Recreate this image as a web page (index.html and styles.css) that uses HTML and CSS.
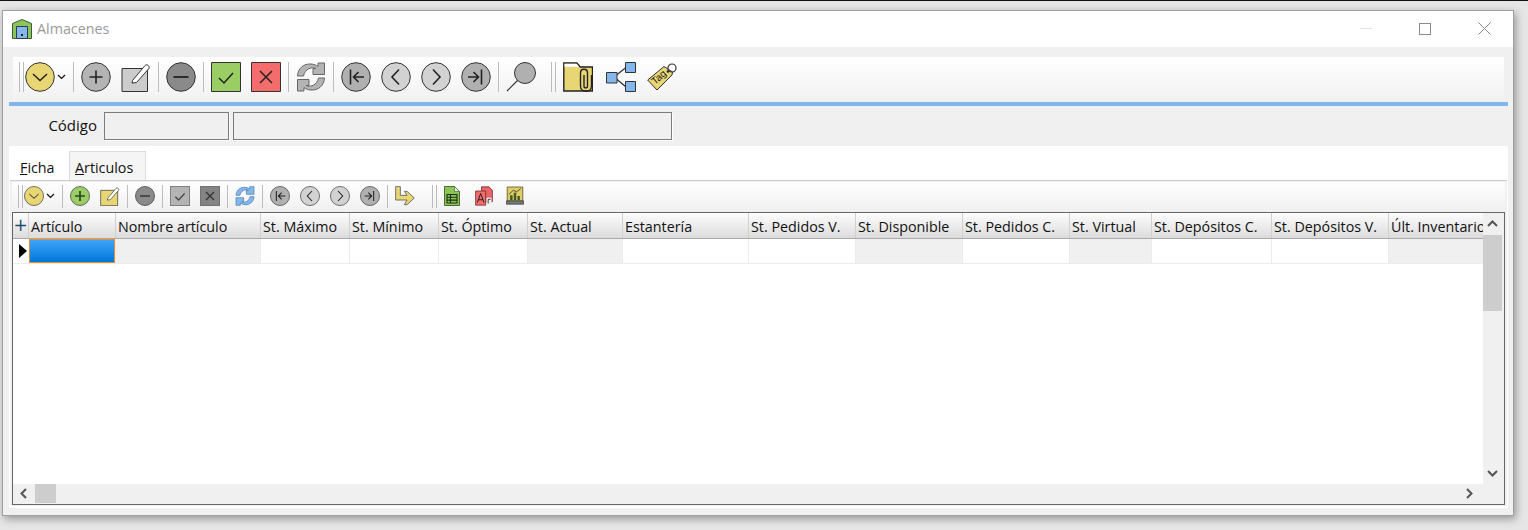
FILE: index.html
```html
<!DOCTYPE html>
<html lang="es">

<head>
  <meta charset="UTF-8">
  <title>Almacenes</title>
  <link rel="stylesheet" href="styles.css">
</head>

<body>
  <!-- iconos compartidos por las dos barras -->
  <svg class="defs" width="0" height="0">
    <symbol id="i-menu" viewBox="0 0 30 30"><circle cx="15" cy="15" r="14.300" fill="#e8d674" stroke="#333"/><path d="M8 12l7 6.500 7-6.500" fill="none" stroke="#222" stroke-width="1.500"/></symbol>
    <symbol id="i-plus" viewBox="0 0 30 30"><circle cx="15" cy="15" r="14.300" fill="#b4b4b4" stroke="#333"/><path d="M15 8.500v13M8.500 15h13" stroke="#222" stroke-width="1.600"/></symbol>
    <symbol id="i-plus-on" viewBox="0 0 30 30"><circle cx="15" cy="15" r="14.300" fill="#9acd64" stroke="#333"/><path d="M15 7.500v15M7.500 15h15" stroke="#2c4a1a" stroke-width="2.600"/></symbol>
    <symbol id="i-edit" viewBox="0 0 30 30"><path d="M1 6.500h25.500V29.500H1z" fill="#ccc" stroke="#333"/><path d="M11.500 18.500L24 3.500c2-2 5.500 1 3.700 3.300L15.500 20.500l-4.500.600z" fill="#fff" stroke="#333"/></symbol>
    <symbol id="i-edit-on" viewBox="0 0 30 30"><path d="M1 6.500h25.500V29.500H1z" fill="#e8d674" stroke="#333"/><path d="M11.500 18.500L24 3.500c2-2 5.500 1 3.700 3.300L15.500 20.500l-4.500.600z" fill="#fff" stroke="#333"/></symbol>
    <symbol id="i-minus" viewBox="0 0 30 30"><circle cx="15" cy="15" r="14.300" fill="#8a8a8a" stroke="#333"/><path d="M7.500 15h15" stroke="#222" stroke-width="1.800"/></symbol>
    <symbol id="i-ok" viewBox="0 0 30 30"><path d="M.5.500h29v29H.500z" fill="#9acd64" stroke="#333"/><path d="M8 16l5 5 9-10" fill="none" stroke="#222" stroke-width="1.500"/></symbol>
    <symbol id="i-no" viewBox="0 0 30 30"><path d="M.5.500h29v29H.500z" fill="#f56c6c" stroke="#333"/><path d="M9 9l12 12M21 9L9 21" stroke="#222" stroke-width="1.500"/></symbol>
    <symbol id="i-ok-off" viewBox="0 0 30 30"><path d="M.5.500h29v29H.500z" fill="#b4b4b4" stroke="#444"/><path d="M8 16l5 5 9-10" fill="none" stroke="#444" stroke-width="2"/></symbol>
    <symbol id="i-no-off" viewBox="0 0 30 30"><path d="M.5.500h29v29H.500z" fill="#848484" stroke="#444"/><path d="M9 9l12 12M21 9L9 21" stroke="#333" stroke-width="2"/></symbol>
    <symbol id="i-sync" viewBox="0 0 30 30"><path d="M1.500 14C2 6 8 1.500 15 2c3 .2 5 1 7 2.500V1h6.500v11.500H17V6.500h3C15 4.500 9 7 7.500 14z" fill="#b4b4b4" stroke="#666"/><path d="M28.500 16C28 24 22 28.500 15 28c-3-.2-5-1-7-2.500V29H1.500V17.500H13v6h-3c5 2 11-.5 12.500-7.500z" fill="#b4b4b4" stroke="#666"/></symbol>
    <symbol id="i-sync-on" viewBox="0 0 30 30"><path d="M1.500 14C2 6 8 1.500 15 2c3 .2 5 1 7 2.500V1h6.500v11.500H17V6.500h3C15 4.500 9 7 7.500 14z" fill="#84b8ec" stroke="#4a78a8"/><path d="M28.500 16C28 24 22 28.500 15 28c-3-.2-5-1-7-2.500V29H1.500V17.500H13v6h-3c5 2 11-.5 12.500-7.500z" fill="#84b8ec" stroke="#4a78a8"/></symbol>
    <symbol id="i-first" viewBox="0 0 30 30"><circle cx="15" cy="15" r="14.300" fill="#b0b0b0" stroke="#333"/><path d="M9.500 7.500v15M23 15H13M17.500 10L12.500 15l5 5" fill="none" stroke="#222" stroke-width="1.600"/></symbol>
    <symbol id="i-prev" viewBox="0 0 30 30"><circle cx="15" cy="15" r="14.300" fill="#d2d2d2" stroke="#333"/><path d="M18 7.500L11 15l7 7.500" fill="none" stroke="#222" stroke-width="1.600"/></symbol>
    <symbol id="i-next" viewBox="0 0 30 30"><circle cx="15" cy="15" r="14.300" fill="#d2d2d2" stroke="#333"/><path d="M12 7.500L19 15l-7 7.500" fill="none" stroke="#222" stroke-width="1.600"/></symbol>
    <symbol id="i-last" viewBox="0 0 30 30"><circle cx="15" cy="15" r="14.300" fill="#b0b0b0" stroke="#333"/><path d="M20.500 7.500v15M7 15h10M12.500 10l5 5-5 5" fill="none" stroke="#222" stroke-width="1.600"/></symbol>
    <symbol id="i-search" viewBox="0 0 30 30"><circle cx="19" cy="11" r="10.500" fill="#b0b0b0" stroke="#333"/><path d="M11.500 18.500L1 29" stroke="#333" stroke-width="1.200"/></symbol>
    <symbol id="i-clip" viewBox="0 0 30 30"><path d="M.8 29V1h13l3.500 4H29.500v24z" fill="#e8d674" stroke="#222" stroke-width="1.400"/><path d="M1.500 1.700h12l2.500 3H1.500z" fill="#fff"/><path d="M21 13v11c0 2.500 3.500 2.500 3.500 0V11c0-5-7-5-7 0v13c0 7 11 7 11 0V13" fill="none" stroke="#222" stroke-width="1.400"/></symbol>
    <symbol id="i-tree" viewBox="0 0 30 30"><path d="M10.500 13L20 5.500M10.500 17L20 25" fill="none" stroke="#333" stroke-width="1.200"/><path d="M.5 10.500h10.500v10.500H.500zM19.500.5h10v10h-10zM19.500 19.500h10v10h-10z" fill="#84b8ec" stroke="#333"/></symbol>
    <symbol id="i-jump" viewBox="0 0 30 30"><path d="M1 1h7v13h10l-4-6h4l11 10-11 10h-4l4-7H1z" fill="#e8d674" stroke="#666" stroke-width="1.400"/></symbol>
    <symbol id="i-sheet" viewBox="0 0 16 20"><path d="M.5.500h10l5 5v14H.500z" fill="#8cc45a" stroke="#4c6e30"/><path d="M10.500.5v5h5z" fill="#eee" stroke="#4c6e30" stroke-width=".7"/><path d="M3 8.500h10v8.500H3zM3 11.300h10M3 14.100h10M6.500 8.500V17" fill="none" stroke="#1c3310" stroke-width="1.100"/></symbol>
    <symbol id="i-pdf" viewBox="0 0 22 24"><path d="M8 1h9l4 4v14H8z" fill="#e8666a" stroke="#7c2a2c"/><path d="M1 6h12v17H1z" fill="#f56c6c" stroke="#7c2a2c"/><path d="M3 20l4-11 4 11M4.500 16.500h5" fill="none" stroke="#222" stroke-width="1.200"/><path d="M14 14h6v8h-6z" fill="#eee"/><path d="M16 21v-5h3" fill="none" stroke="#222"/></symbol>
    <symbol id="i-chart" viewBox="0 0 22 24"><path d="M1.500 1h19v17h-19z" fill="#e0cc68" stroke="#5a5228"/><path d="M.5 18h21v4H.5z" fill="#777" stroke="#444"/><path d="M5 17v-6h3v6zM9.500 17V8h3v9zM14 17v-5h3v5z" fill="#3a5e24"/><path d="M3.500 10L9 5l4 2 5-4" fill="none" stroke="#333"/></symbol>
  </svg>

  <div class="window">
    <div class="titlebar">
      <svg class="app-icon" viewBox="0 0 20 20"><path d="M.5 19.500V4.500L10 .5l9.500 4v15z" fill="#8cc45a" stroke="#3c5c40"/><path d="M4.500 19.500V7.500h11v12z" fill="#84b8ec" stroke="#2c3c4c"/><rect x="9" y="15" width="2" height="2" fill="#222"/></svg>
      <span class="title">Almacenes</span>
      <div class="win-buttons">
        <span class="win-min"></span>
        <span class="win-max"></span>
        <svg class="win-close" viewBox="0 0 13 13"><path d="M.5.500l12 12M12.500.5l-12 12" stroke="#8a8a8a" fill="none"/></svg>
      </div>
    </div>

    <div class="content">
      <div class="toolbar big" id="mainBar"></div>
      <div class="blue-line"></div>

      <div class="code-row">
        <label class="code-label">Código</label>
        <div class="field short"></div>
        <div class="field long"></div>
      </div>

      <div class="panel">
        <div class="tabs">
          <div class="tab"><u>F</u>icha</div>
          <div class="tab active"><u>A</u>rticulos</div>
        </div>
        <div class="tab-body">
          <div class="toolbar small" id="subBar"></div>
          <div class="grid-frame">
            <div class="grid-main">
              <div class="grid-area">
                <div class="grid-rows" id="grid"></div>
              </div>
              <div class="vscroll">
                <svg class="arrow" viewBox="0 0 11 7"><path d="M1 6l4.500-4.500L10 6" fill="none" stroke="#555" stroke-width="2"/></svg>
                <div class="vthumb"></div>
                <div class="spacer"></div>
                <svg class="arrow" viewBox="0 0 11 7"><path d="M1 1l4.500 4.500L10 1" fill="none" stroke="#555" stroke-width="2"/></svg>
              </div>
            </div>
            <div class="hscroll">
              <svg class="arrow-h" viewBox="0 0 7 11"><path d="M6 1L1.500 5.500 6 10" fill="none" stroke="#555" stroke-width="2"/></svg>
              <div class="hthumb"></div>
              <div class="spacer"></div>
              <svg class="arrow-h right" viewBox="0 0 7 11"><path d="M1 1l4.500 4.500L1 10" fill="none" stroke="#555" stroke-width="2"/></svg>
            </div>
          </div>
        </div>
      </div>
    </div>
  </div>

  <script>
    // tipo de elemento: g = agarre, s = separador, m = menu con flecha, resto = id de icono
    const mainItems = ['g', 'm', 's', 'plus', 'edit', 's', 'minus', 's', 'ok', 'no', 's', 'sync', 's', 'first', 'prev', 'next', 'last', 's', 'search', 'g', 'clip', 'tree', 'tag'];
    const subItems = ['g', 'm', 's', 'plus-on', 'edit-on', 's', 'minus', 's', 'ok-off', 'no-off', 's', 'sync-on', 's', 'first', 'prev', 'next', 'last', 's', 'jump', 'g', 'sheet', 'pdf', 'chart'];

    // la etiqueta lleva texto real, por eso va dibujada aqui y no como symbol
    const tagIcon = '<svg class="icon" viewBox="0 0 30 30"><path d="M.7 18L17 4.500l8.500 5.500-.5 3L10 28z" fill="#e8d674" stroke="#333"/><circle cx="25" cy="6" r="4" fill="none" stroke="#333" stroke-width="1.200"/><circle cx="21" cy="9.500" r="1.300" fill="#222"/><text class="tag-text" transform="translate(8 23) rotate(-42)">Tag</text></svg>';

    function fillBar(bar, items) {
      items.forEach(item => {
        const el = document.createElement('span');
        if (item === 'g') {
          el.className = 'grip';
        } else if (item === 's') {
          el.className = 'sep';
        } else if (item === 'tag') {
          el.className = 'tool tool-tag';
          el.innerHTML = tagIcon;
        } else {
          const id = item === 'm' ? 'menu' : item;
          el.className = 'tool tool-' + id;
          el.innerHTML = `<svg class="icon"><use href="#i-${id}"></use></svg>`;
          if (item === 'm') {
            el.innerHTML += '<svg class="caret" viewBox="0 0 9 6"><path d="M1 1l3.500 3.500L8 1" fill="none" stroke="#111" stroke-width="1.200"/></svg>';
          }
        }
        bar.appendChild(el);
      });
    }
    fillBar(document.getElementById('mainBar'), mainItems);
    fillBar(document.getElementById('subBar'), subItems);

    // columnas de la rejilla; ro = columna de solo lectura (fondo gris)
    const columns = [
      { name: 'Artículo', w: 87 },
      { name: 'Nombre artículo', w: 145, ro: true },
      { name: 'St. Máximo', w: 89 },
      { name: 'St. Mínimo', w: 89 },
      { name: 'St. Óptimo', w: 89 },
      { name: 'St. Actual', w: 95, ro: true },
      { name: 'Estantería', w: 126 },
      { name: 'St. Pedidos V.', w: 107 },
      { name: 'St. Disponible', w: 107, ro: true },
      { name: 'St. Pedidos C.', w: 107 },
      { name: 'St. Virtual', w: 82, ro: true },
      { name: 'St. Depósitos C.', w: 120 },
      { name: 'St. Depósitos V.', w: 117 },
      { name: 'Últ. Inventario', w: 95, ro: true }
    ];
    const grid = document.getElementById('grid');
    const head = document.createElement('div');
    head.className = 'grid-row head';
    const row = document.createElement('div');
    row.className = 'grid-row data';
    head.innerHTML = '<div class="corner">+</div>';
    row.innerHTML = '<div class="row-mark"><span class="pointer"></span></div>';
    columns.forEach((col, i) => {
      const th = document.createElement('div');
      th.className = 'th';
      th.style.width = col.w + 'px';
      th.textContent = col.name;
      head.appendChild(th);
      const td = document.createElement('div');
      td.className = 'td' + (col.ro ? ' ro' : '') + (i === 0 ? ' current' : '');
      // la marca de fila ocupa 1px mas que la esquina de la cabecera
      td.style.width = (i === 0 ? col.w - 1 : col.w) + 'px';
      row.appendChild(td);
    });
    grid.appendChild(head);
    grid.appendChild(row);
  </script>
</body>

</html>
```

FILE: styles.css
```css
* {
  box-sizing: border-box;
}

body {
  margin: 0;
  height: 530px;
  overflow: hidden;
  background: #e6e6e6;
  border-top: 1px solid #111;
  font-family: "Open Sans", "Liberation Sans", sans-serif;
  font-size: 14.3px;
  color: #111;
}

.defs {
  position: absolute;
}

.tag-text {
  font-family: "Liberation Sans", sans-serif;
  font-size: 10px;
  fill: #222;
}

.window {
  display: flex;
  flex-direction: column;
  width: 1512px;
  height: 506px;
  margin: 9px 0 0 2px;
  background: #f0f0f0;
  border: 1px solid #a0a0a0;
  box-shadow: 2px 3px 8px rgba(0, 0, 0, 0.35);
}

.titlebar {
  display: flex;
  align-items: center;
  height: 36px;
  padding: 0 0 1px 9px;
  background: #fff;
  flex: none;
}

.app-icon {
  width: 20px;
  height: 20px;
}

.title {
  margin-left: 5px;
  color: #9a9a9a;
}

.win-buttons {
  display: flex;
  align-items: center;
  margin-left: auto;
}

.win-min {
  width: 12px;
  border-top: 1px solid #e4e4e4;
}

.win-max {
  width: 12px;
  height: 12px;
  margin-left: 47px;
  border: 1px solid #8a8a8a;
}

.win-close {
  width: 13px;
  height: 13px;
  margin: 0 22px 0 47px;
}

.content {
  display: flex;
  flex-direction: column;
  flex: 1;
  padding: 10px 5px 0 6px;
}

.toolbar {
  display: flex;
  align-items: center;
  flex: none;
  background: linear-gradient(#fff, #f1f1f1);
}

.toolbar.big {
  height: 45px;
  margin: 0 4px;
  padding: 0 0 5px 6px;
  --icon: 30px;
  --bar-h: 30px;
}

.toolbar.small {
  height: 28px;
  margin-top: 1px;
  padding-left: 6px;
  --icon: 20px;
  --bar-h: 23px;
}

.grip {
  width: 5px;
  height: var(--bar-h);
  margin-right: 1px;
  border-left: 1px solid #bbb;
  border-right: 1px solid #bbb;
  flex: none;
}

.sep {
  width: 1px;
  height: var(--bar-h);
  margin: 0 7px;
  background: #bdbdbd;
  flex: none;
}

.tool {
  display: flex;
  align-items: center;
  flex: none;
}

.tool + .tool {
  margin-left: 10px;
}

.icon {
  display: block;
  width: var(--icon);
  height: var(--icon);
}

.caret {
  width: 9px;
  height: 6px;
  margin-left: 2px;
}

.big .grip:not(:first-child) {
  margin: 0 7px 0 15px;
}

.small .grip:not(:first-child) {
  margin: 0 7px 0 17px;
}

.big .tool-tree {
  margin-left: 13px;
}

.big .tool-tag {
  margin-left: 11px;
}

.small .tool-sheet .icon {
  width: 16px;
}

.small .tool-pdf {
  margin-left: 14px;
}

.small .tool-chart {
  margin-left: 12px;
}

.small .tool-chart .icon {
  width: 18px;
}

.blue-line {
  height: 4px;
  background: #83b6ec;
  flex: none;
}

.code-row {
  display: flex;
  align-items: center;
  height: 40px;
  flex: none;
}

.code-label {
  width: 88px;
  margin-top: -2px;
  font-size: 15px;
  text-align: right;
}

.field {
  height: 28px;
  background: #f0f0f0;
  border: 1px solid #7c7c7c;
  box-shadow: 1px 1px 0 #fff;
}

.field.short {
  width: 125px;
  margin-left: 7px;
}

.field.long {
  width: 439px;
  margin-left: 4px;
}

.panel {
  display: flex;
  flex-direction: column;
  height: 362px;
  background: #fff;
  flex: none;
}

.tabs {
  display: flex;
  align-items: flex-end;
  height: 34px;
  padding-left: 5px;
  flex: none;
}

.tab {
  width: 55px;
  height: 29px;
  padding-left: 6px;
  line-height: 33px;
}

.tab.active {
  width: 77px;
  background: #f5f5f5;
  border: 1px solid #dcdcdc;
  border-bottom: 0;
  padding-left: 5px;
  line-height: 32px;
}

.tab-body {
  display: flex;
  flex-direction: column;
  flex: none;
  margin: 0 1px 2px;
  padding: 0 2px 1px;
  background: #f0f0f0;
  border-top: 1px solid #ccc;
}

.grid-frame {
  display: flex;
  flex-direction: column;
  height: 293px;
  margin-top: 2px;
  background: #f0f0f0;
  border: 1px solid #666;
}

.grid-main {
  display: flex;
  flex: 1;
  min-height: 0;
}

.grid-area {
  flex: 1;
  min-width: 0;
  overflow: hidden;
  background: #fff;
}

.grid-row {
  display: flex;
  white-space: nowrap;
}

.grid-row.head {
  height: 26px;
  border-bottom: 1px solid #aaa;
}

.corner {
  width: 15px;
  flex: none;
  font-family: "DejaVu Sans", sans-serif;
  font-size: 17px;
  line-height: 25px;
  text-align: center;
  color: #1c4a6c;
  background: linear-gradient(#fdfdfd, #dcdcdc);
}

.th {
  padding-left: 2px;
  flex: none;
  overflow: hidden;
  line-height: 27px;
  background: linear-gradient(#fdfdfd, #dcdcdc);
  border-left: 1px solid #d0d0d0;
  color: #111;
}

.grid-row.data {
  height: 25px;
  border-bottom: 1px solid #ececec;
}

.row-mark {
  display: flex;
  align-items: center;
  justify-content: center;
  width: 16px;
  flex: none;
}

.pointer {
  width: 0;
  height: 0;
  margin-left: 3px;
  border-top: 7px solid transparent;
  border-bottom: 7px solid transparent;
  border-left: 8px solid #000;
}

.td {
  flex: none;
  border-left: 1px solid #ececec;
}

.td.ro {
  background: #f0f0f0;
}

.td.current {
  background: linear-gradient(#3ea3f8, #0078dc);
  border: 1px solid #f08a24;
}

.vscroll {
  display: flex;
  flex-direction: column;
  align-items: center;
  width: 19px;
  margin-right: 2px;
  background: #f0f0f0;
  flex: none;
}

.arrow {
  width: 11px;
  height: 7px;
  margin: 7px 0;
  flex: none;
}

.vthumb {
  width: 19px;
  height: 76px;
  margin-top: 1px;
  background: #cdcdcd;
  flex: none;
}

.spacer {
  flex: 1;
}

.hscroll {
  display: flex;
  align-items: center;
  height: 19px;
  margin: 0 2px 1px 0;
  background: #f0f0f0;
  flex: none;
}

.arrow-h {
  width: 7px;
  height: 11px;
  margin-left: 7px;
  flex: none;
}

.arrow-h.right {
  margin: 0 29px 0 0;
}

.hthumb {
  width: 21px;
  height: 19px;
  margin-left: 8px;
  background: #cdcdcd;
  flex: none;
}
```
